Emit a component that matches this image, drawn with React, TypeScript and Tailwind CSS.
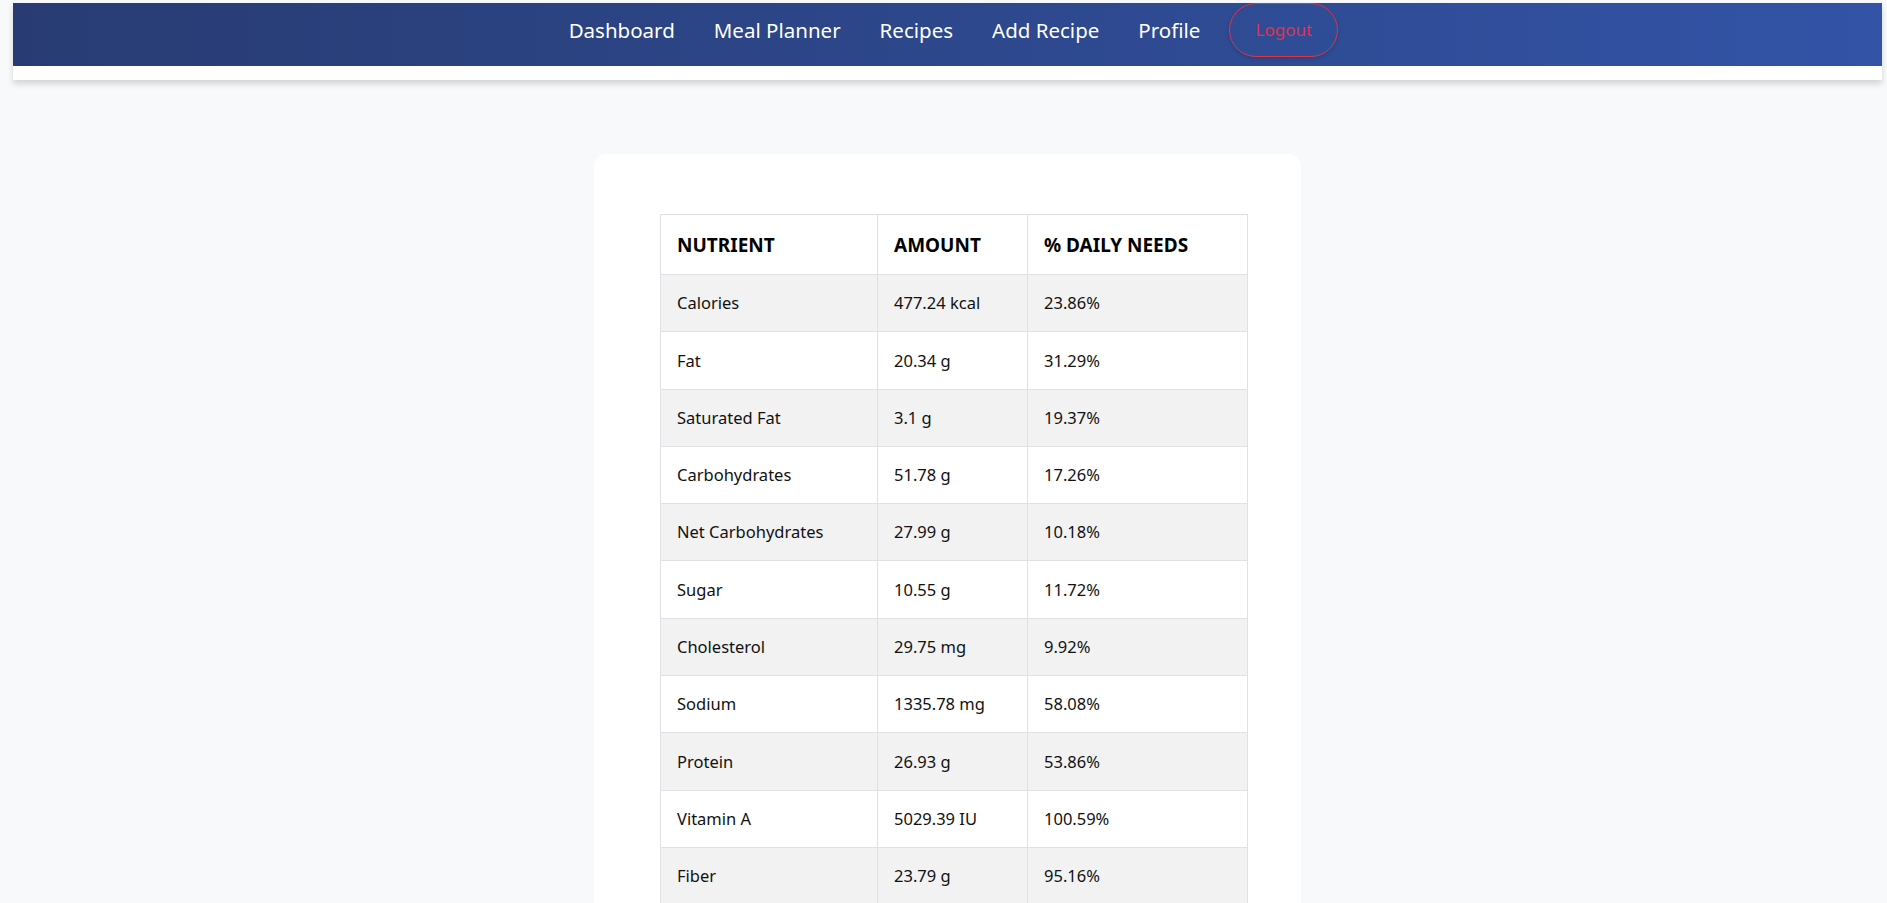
import React from "react";

const rows: [string, string, string][] = [
  ["Calories", "477.24 kcal", "23.86%"],
  ["Fat", "20.34 g", "31.29%"],
  ["Saturated Fat", "3.1 g", "19.37%"],
  ["Carbohydrates", "51.78 g", "17.26%"],
  ["Net Carbohydrates", "27.99 g", "10.18%"],
  ["Sugar", "10.55 g", "11.72%"],
  ["Cholesterol", "29.75 mg", "9.92%"],
  ["Sodium", "1335.78 mg", "58.08%"],
  ["Protein", "26.93 g", "53.86%"],
  ["Vitamin A", "5029.39 IU", "100.59%"],
  ["Fiber", "23.79 g", "95.16%"],
];

export default function App() {
  return (
    <div
      className="min-h-screen bg-[#f8f9fa] pt-[3px] pb-10"
      style={{ fontFamily: '"Noto Sans", "Open Sans", sans-serif' }}
    >
      <div className="ml-[13px] mr-[5px]">
        <header className="bg-white border-t border-[#dedede] pb-[14px] shadow-[0_4px_6px_rgba(0,0,0,0.15)]">
          <nav className="h-[63px] bg-gradient-to-r from-[#283c73] to-[#3253a6]">
            <div className="-mt-[1px] h-[54px] pl-[12px] flex items-center justify-center gap-[39px] text-white text-[20.5px]">
              <a className="cursor-pointer">Dashboard</a>
              <a className="cursor-pointer">Meal Planner</a>
              <a className="cursor-pointer">Recipes</a>
              <a className="cursor-pointer">Add Recipe</a>
              <a className="cursor-pointer">Profile</a>
              <button className="-ml-[10px] w-[109px] h-[54px] rounded-[27px] border border-[#dc3545] text-[#e0324f] text-[17px] shadow-[0_2px_4px_rgba(0,0,0,0.15)]">
                Logout
              </button>
            </div>
          </nav>
        </header>

        <main className="mt-[74px] flex justify-center">
          <div className="w-[707px] bg-white rounded-[12px] pt-[60px] pl-[66px] pr-[54px] pb-[60px]">
            <table className="w-[587px] border-collapse text-[#111] text-[16.5px] table-fixed">
              <colgroup>
                <col className="w-[217px]" />
                <col className="w-[150px]" />
                <col className="w-[220px]" />
              </colgroup>
              <thead>
                <tr className="h-[60px] bg-white">
                  <th className="border border-[#dee2e6] px-4 pt-[2px] text-left font-bold text-[19px] uppercase text-black">Nutrient</th>
                  <th className="border border-[#dee2e6] px-4 pt-[2px] text-left font-bold text-[19px] uppercase text-black">Amount</th>
                  <th className="border border-[#dee2e6] px-4 pt-[2px] text-left font-bold text-[19px] uppercase text-black">% Daily Needs</th>
                </tr>
              </thead>
              <tbody>
                {rows.map((r, i) => (
                  <tr key={r[0]} className={i % 2 === 0 ? "h-[57.3px] bg-[#f2f2f2]" : "h-[57.3px] bg-white"}>
                    <td className="border border-[#dee2e6] px-4 pt-[1px]">{r[0]}</td>
                    <td className="border border-[#dee2e6] px-4 pt-[1px]">{r[1]}</td>
                    <td className="border border-[#dee2e6] px-4 pt-[1px]">{r[2]}</td>
                  </tr>
                ))}
              </tbody>
            </table>
          </div>
        </main>
      </div>
    </div>
  );
}
